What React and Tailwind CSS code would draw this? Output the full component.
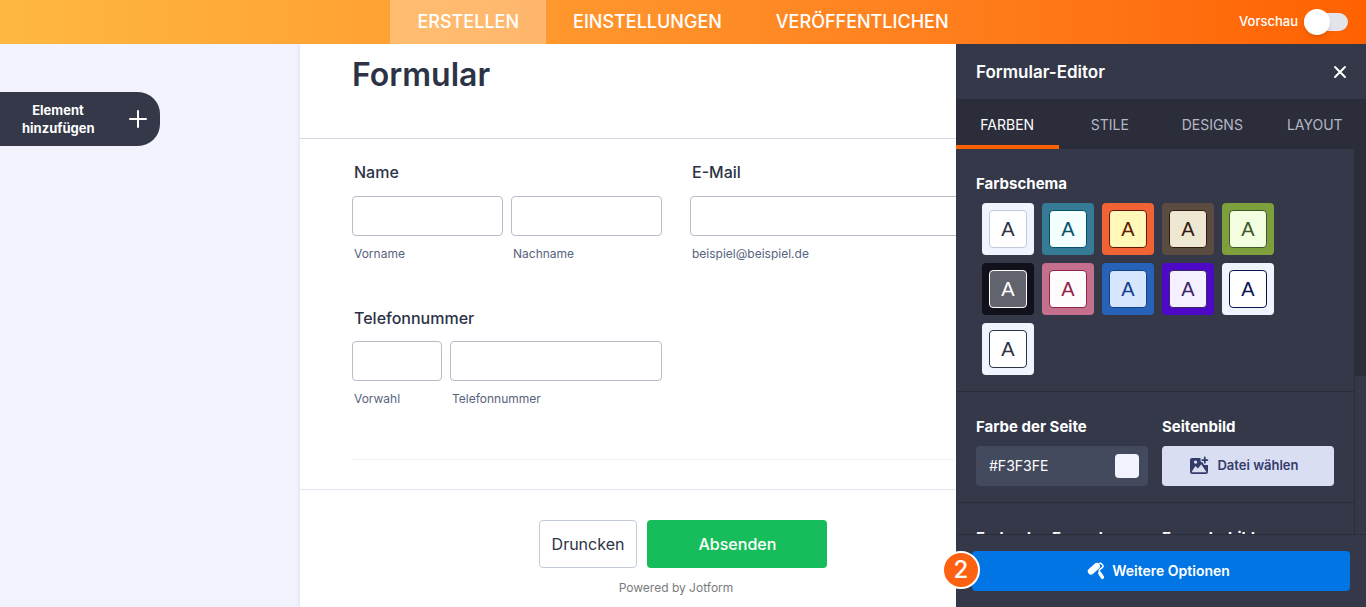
import React, { useState } from "react";

const NAV_ITEMS = ["Erstellen", "Einstellungen", "Veröffentlichen"];

const TABS = ["Farben", "Stile", "Designs", "Layout"];

const SCHEMES = [
    { name: "Standard", outer: "bg-[#f0f4ff]", inner: "border-[#c3cad8] bg-white text-[#2c3345]" },
    { name: "Petrol", outer: "bg-[#357b95]", inner: "border-[#04526b] bg-[#f3feff] text-[#04526b]" },
    { name: "Orange", outer: "bg-[#f16334]", inner: "border-[#661804] bg-[#fff8b9] text-[#661804]" },
    { name: "Braun", outer: "bg-[#5b4b41]", inner: "border-[#301a12] bg-[#eee7d2] text-[#301a12]" },
    { name: "Grün", outer: "bg-[#7d9f3c]", inner: "border-[#40582b] bg-[#f3ffe0] text-[#40582b]" },
    { name: "Dunkel", outer: "bg-[#10111b]", inner: "border-white bg-[#62646d] text-white" },
    { name: "Rosa", outer: "bg-[#c56f8e]", inner: "border-[#8f2449] bg-[#fffafc] text-[#8f2449]" },
    { name: "Blau", outer: "bg-[#2562b8]", inner: "border-[#12418a] bg-[#d7e6ff] text-[#12418a]" },
    { name: "Violett", outer: "bg-[#4e09c7]", inner: "border-[#3b2566] bg-[#f5f0ff] text-[#3b2566]" },
    { name: "Marine", outer: "bg-[#f0f4ff]", inner: "border-[#0a1551] bg-white text-[#0a1551]" },
    { name: "Schlicht", outer: "bg-[#f0f4ff]", inner: "border-[#2c3345] bg-white text-[#2c3345]" },
];

function PlusIcon() {
    return (
        <svg className="h-5 w-5" viewBox="0 0 20 20" fill="none" stroke="currentColor" strokeWidth={2} strokeLinecap="round">
            <path d="M10 2v16M2 10h16" />
        </svg>
    );
}

function ImageAddIcon() {
    return (
        <svg className="h-5 w-5" viewBox="0 0 20 20" fill="none">
            <path
                fill="currentColor"
                fillRule="evenodd"
                d="M3 2h8.5v2.5a2 2 0 002 2h.5v.5a2 2 0 002 2h3V16a2 2 0 01-2 2H3a2 2 0 01-2-2V4a2 2 0 012-2zm3.6 2.4a1.7 1.7 0 100 3.4 1.7 1.7 0 000-3.4zM2.4 16.2h15.2L12.2 8.2 9 12.6 6.4 10z"
            />
            <path stroke="currentColor" strokeWidth={1.8} strokeLinecap="round" d="M15.8 1.5v5.2M13.2 4.1h5.2" />
        </svg>
    );
}

function RollerIcon() {
    return (
        <svg className="h-5 w-5" viewBox="0 0 20 20" fill="none">
            <path
                stroke="currentColor"
                strokeWidth={6.4}
                strokeLinecap="round"
                d="M5 10.4L10.8 5.2"
            />
            <path
                stroke="currentColor"
                strokeWidth={1.5}
                strokeLinecap="round"
                strokeLinejoin="round"
                d="M13.4 2.4c1.2-.5 2.1.1 2.3 1 1.5.5 1.8 2 .8 3l-2.8 2.2c-.9.8-.8 1.6-.1 2.4"
            />
            <path stroke="currentColor" strokeWidth={3.4} strokeLinecap="round" d="M13.8 12.2l2.6 4" />
        </svg>
    );
}

function Header() {
    const [preview, setPreview] = useState(false);

    return (
        <header className="grid h-11 shrink-0 grid-cols-[1fr_auto_1fr] bg-linear-to-r from-[#ffb841] to-[#ff6100] text-white">
            <nav className="col-start-2 flex">
                {NAV_ITEMS.map((item, i) => (
                    <a
                        key={item}
                        href="#"
                        className={`flex items-center px-[27px] text-lg leading-6 font-medium uppercase ${
                            i === 0 ? "bg-white/30" : ""
                        }`}
                    >
                        {item}
                    </a>
                ))}
            </nav>
            <label className="flex cursor-pointer items-center justify-end gap-1.5 pr-[18px] text-[13px] font-medium">
                Vorschau
                <span className="relative flex h-[26px] w-11 items-center">
                    <input
                        type="checkbox"
                        checked={preview}
                        onChange={(e) => setPreview(e.target.checked)}
                        className="peer h-[18px] w-full cursor-pointer appearance-none rounded-full bg-[#e3e5eb] checked:bg-[#78bb07]"
                    />
                    <span className="pointer-events-none absolute left-0 h-[26px] w-[26px] rounded-full bg-white shadow-md peer-checked:left-[18px]"></span>
                </span>
            </label>
        </header>
    );
}

function Field({ id, label, className }) {
    return (
        <div className={className}>
            <input
                id={id}
                type="text"
                className="block h-10 w-full rounded border border-[#b8bdc9] bg-white px-2.5"
            />
            <label htmlFor={id} className="mt-2 block pl-0.5 text-xs leading-5 text-[#57647e]">
                {label}
            </label>
        </div>
    );
}

function FormPage() {
    return (
        <form className="mx-auto min-h-full w-[766px] max-w-full bg-white text-[#2c3345] shadow-[0_0_4px_rgba(87,100,126,0.2)]">
            <div className="border-b border-[#d7d8e4] px-[52px] pt-[11px] pb-[43px]">
                <h1 className="text-[32px] leading-10 font-semibold">Formular</h1>
            </div>
            <div className="grid grid-cols-2 gap-x-7 gap-y-[42px] pt-[21px] pr-[66px] pl-[52px]">
                <fieldset>
                    <legend className="pl-0.5 text-base leading-6 font-medium">Name</legend>
                    <div className="mt-3 flex gap-2">
                        <Field id="first" label="Vorname" className="flex-1" />
                        <Field id="last" label="Nachname" className="flex-1" />
                    </div>
                </fieldset>
                <fieldset>
                    <legend className="pl-0.5 text-base leading-6 font-medium">E-Mail</legend>
                    <div className="mt-3">
                        <Field id="email" label="beispiel@beispiel.de" />
                    </div>
                </fieldset>
                <fieldset>
                    <legend className="pl-0.5 text-base leading-6 font-medium">Telefonnummer</legend>
                    <div className="mt-[11px] flex gap-2">
                        <Field id="area" label="Vorwahl" className="w-[90px]" />
                        <Field id="phone" label="Telefonnummer" className="flex-1" />
                    </div>
                </fieldset>
            </div>
            <hr className="mt-[50px] ml-[52px] border-[#f3f3fe]" />
            <div className="mt-[29px] border-t border-[#e5e6f1] pt-[30px] pb-2">
                <div className="flex justify-center gap-2.5">
                    <button type="button" className="h-12 rounded border border-[#c3cad8] px-3 text-base">
                        Druncken
                    </button>
                    <button type="submit" className="h-12 w-[180px] rounded bg-[#18bd5b] text-base font-medium text-white">
                        Absenden
                    </button>
                </div>
                <p className="mt-2.5 pr-3.5 text-center text-xs leading-5 text-[#7b7b7b]">Powered by Jotform</p>
            </div>
        </form>
    );
}

function SchemePicker() {
    return (
        <section className="border-b border-[#2b2d3b] px-5 pt-[25px] pb-4">
            <h3 className="text-[15px] leading-5 font-bold">Farbschema</h3>
            <div className="mt-[9px] flex flex-wrap gap-2 pr-10 pl-1.5">
                {SCHEMES.map((scheme) => (
                    <button
                        key={scheme.name}
                        type="button"
                        aria-label={scheme.name}
                        className={`h-[52px] w-[52px] rounded p-[7px] ${scheme.outer}`}
                    >
                        <span
                            className={`flex h-full items-center justify-center rounded-sm border font-['Liberation_Sans',sans-serif] text-xl ${scheme.inner}`}
                        >
                            A
                        </span>
                    </button>
                ))}
            </div>
        </section>
    );
}

function PageSection() {
    const [color, setColor] = useState("#F3F3FE");

    return (
        <section className="grid grid-cols-2 gap-x-3.5 gap-y-[9px] border-b border-[#2b2d3b] px-5 pt-[25px] pb-4">
            <label htmlFor="page-color" className="text-[15px] leading-5 font-bold">
                Farbe der Seite
            </label>
            <h3 className="text-[15px] leading-5 font-bold">Seitenbild</h3>
            <div className="flex h-10 items-center rounded bg-[#444a5e] pr-[9px] pl-[13px]">
                <input
                    id="page-color"
                    type="text"
                    value={color}
                    onChange={(e) => setColor(e.target.value)}
                    className="min-w-0 flex-1 bg-transparent text-sm focus:outline-none"
                />
                <button
                    type="button"
                    aria-label="Farbe auswählen"
                    className="h-6 w-6 rounded"
                    style={{ backgroundColor: color }}
                ></button>
            </div>
            <button
                type="button"
                className="flex h-10 items-center justify-center gap-2 rounded bg-[#dadef3] pr-2 text-[13px] font-semibold text-[#343c6a]"
            >
                <ImageAddIcon />
                Datei wählen
            </button>
        </section>
    );
}

function EditorPanel() {
    const [activeTab, setActiveTab] = useState("Farben");

    return (
        <aside className="absolute inset-y-0 right-0 flex w-[410px] flex-col bg-[#343849] text-white">
            <div className="flex h-[55px] shrink-0 items-center justify-between pr-[18px] pl-5">
                <h2 className="text-[17px] leading-6 font-semibold">Formular-Editor</h2>
                <button type="button" aria-label="Schließen">
                    <svg className="h-4 w-4" viewBox="0 0 16 16" fill="none" stroke="currentColor" strokeWidth={2} strokeLinecap="round">
                        <path d="M3 3l10 10M13 3L3 13" />
                    </svg>
                </button>
            </div>
            <div className="grid h-[50px] shrink-0 grid-cols-4 bg-[#2b2d3b]">
                {TABS.map((tab) => (
                    <button
                        key={tab}
                        type="button"
                        onClick={() => setActiveTab(tab)}
                        className={`border-b-4 pt-1.5 text-sm uppercase ${
                            activeTab === tab
                                ? "border-b-[#ff6100] text-white"
                                : "border-b-transparent text-[#b5b8c5]"
                        }`}
                    >
                        {tab}
                    </button>
                ))}
            </div>
            <div className="flex min-h-0 flex-1">
                <div className="min-w-0 flex-1 overflow-hidden">
                    <SchemePicker />
                    <PageSection />
                    <section className="grid grid-cols-2 gap-x-3.5 px-5 pt-[25px]">
                        <h3 className="text-[15px] leading-5 font-bold">Farbe des Formulars</h3>
                        <h3 className="text-[15px] leading-5 font-bold">Formularbild</h3>
                    </section>
                </div>
                {/* scroll track */}
                <div className="flex w-3 flex-col justify-end bg-[#2b2d3b]">
                    <div className="h-[41%] border-l border-[#2b2d3b] bg-[#343849]"></div>
                </div>
            </div>
            <div className="relative shrink-0 border-t border-[#2b2d3b] p-4">
                <button
                    type="button"
                    className="flex h-10 w-full items-center justify-center gap-1.5 rounded bg-[#0075e3] pr-1.5 text-sm font-semibold"
                >
                    <RollerIcon />
                    Weitere Optionen
                </button>
                <span className="absolute top-4 -left-3.5 flex h-[38px] w-[38px] items-center justify-center rounded-full border-2 border-white bg-[#ff6112] text-2xl font-medium">
                    2
                </span>
            </div>
        </aside>
    );
}

export default function App() {
    return (
        <div className="flex h-screen flex-col overflow-hidden font-['Inter',sans-serif]">
            <Header />
            <main className="relative min-h-0 flex-1 overflow-hidden bg-[#f3f3fe]">
                <FormPage />
                <button
                    type="button"
                    className="absolute top-12 left-0 flex h-[54px] w-40 items-center justify-between rounded-r-[22px] bg-[#343849] pr-3 pl-[22px] text-[13px] leading-[18px] font-bold text-white"
                >
                    <span className="w-[72px] text-center">Element hinzufügen</span>
                    <PlusIcon />
                </button>
                <EditorPanel />
            </main>
        </div>
    );
}
